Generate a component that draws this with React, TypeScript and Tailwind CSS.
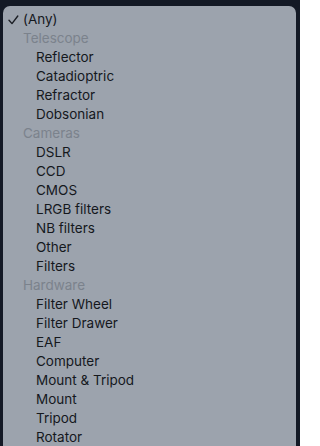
import React from "react";

type Row = { label: string; kind: "any" | "header" | "item" };

const rows: Row[] = [
  { label: "(Any)", kind: "any" },
  { label: "Telescope", kind: "header" },
  { label: "Reflector", kind: "item" },
  { label: "Catadioptric", kind: "item" },
  { label: "Refractor", kind: "item" },
  { label: "Dobsonian", kind: "item" },
  { label: "Cameras", kind: "header" },
  { label: "DSLR", kind: "item" },
  { label: "CCD", kind: "item" },
  { label: "CMOS", kind: "item" },
  { label: "LRGB filters", kind: "item" },
  { label: "NB filters", kind: "item" },
  { label: "Other", kind: "item" },
  { label: "Filters", kind: "item" },
  { label: "Hardware", kind: "header" },
  { label: "Filter Wheel", kind: "item" },
  { label: "Filter Drawer", kind: "item" },
  { label: "EAF", kind: "item" },
  { label: "Computer", kind: "item" },
  { label: "Mount & Tripod", kind: "item" },
  { label: "Mount", kind: "item" },
  { label: "Tripod", kind: "item" },
  { label: "Rotator", kind: "item" },
];

function Check() {
  return (
    <svg width="11" height="10" viewBox="0 0 11 10" className="absolute left-[-15px] top-[5px]">
      <path d="M1 5.2 L4 8.6 L9.8 1" fill="none" stroke="#1b1e24" strokeWidth="1.4" strokeLinecap="round" strokeLinejoin="round" />
    </svg>
  );
}

export default function App() {
  return (
    <div className="w-[300px] h-[446px] overflow-hidden bg-[#131925] pt-[6px] pl-[3px] pr-[4px]">
      <div
        className="h-[460px] rounded-t-[7px] bg-[#9ca3ad] pt-[4px] pl-[20px]"
        style={{ fontFamily: "Inter, 'Liberation Sans', sans-serif" }}
      >
        {rows.map((r, i) => (
          <div
            key={i}
            className={
              r.kind === "header"
                ? "relative h-[19px] leading-[19px] text-[13.5px] text-[#7b828c]"
                : r.kind === "any"
                ? "relative h-[19px] leading-[19px] text-[13.5px] text-[#15181d]"
                : "relative h-[19px] leading-[19px] text-[13.5px] text-[#15181d] pl-[13px]"
            }
          >
            {r.kind === "any" && <Check />}
            {r.label}
          </div>
        ))}
      </div>
    </div>
  );
}
